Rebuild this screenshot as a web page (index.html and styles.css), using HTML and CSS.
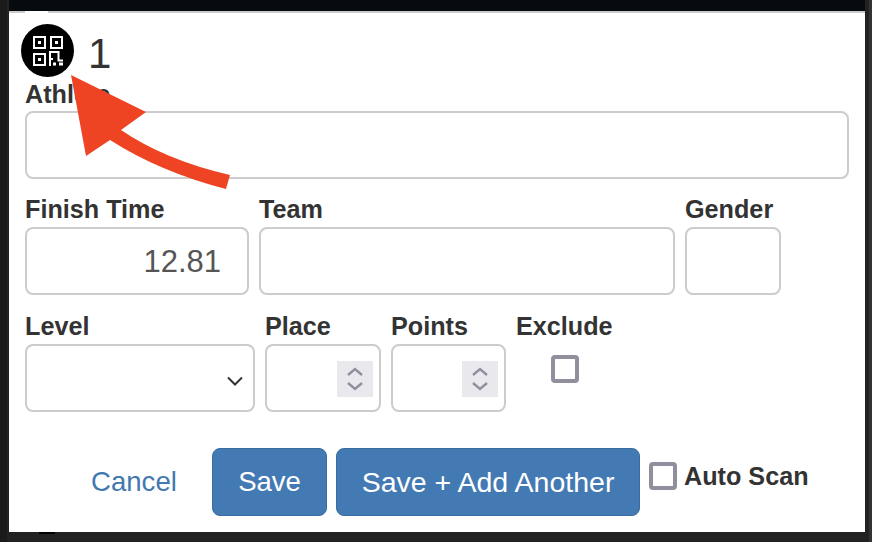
FILE: index.html
```html
<!DOCTYPE html>
<html lang="en">
<head>
<meta charset="utf-8">
<title>Result entry</title>
<link rel="stylesheet" href="styles.css">
</head>
<body>
<div class="frame">
  <div class="topbar"><span class="tab-notch"></span></div>
  <main class="panel">
    <header class="head">
      <span class="qr">
        <svg viewBox="0 0 30 30" width="30" height="30" fill="none" stroke="#fff" stroke-width="2">
          <rect x="1" y="1" width="11" height="11"/><rect x="18" y="1" width="11" height="11"/><rect x="1" y="18" width="11" height="11"/>
          <rect x="5" y="5" width="3" height="3" fill="#fff" stroke="none"/><rect x="22" y="5" width="3" height="3" fill="#fff" stroke="none"/><rect x="5" y="22" width="3" height="3" fill="#fff" stroke="none"/>
          <path d="M17 30V16h8.500v8.500H30M17 23h3"/>
          <path d="M20 28h3M26 28h4" stroke-width="3"/>
        </svg>
      </span>
      <span class="num">1</span>
    </header>
    <div class="row row-athlete">
      <div class="field grow"><label class="lbl">Athlete</label><div class="box"></div></div>
    </div>
    <div class="row row-mid">
      <div class="field w-time"><label class="lbl">Finish Time</label><div class="box value">12.81</div></div>
      <div class="field grow"><label class="lbl">Team</label><div class="box"></div></div>
      <div class="field w-gender"><label class="lbl">Gender</label><div class="box"></div></div>
    </div>
    <div class="row row-low">
      <div class="field w-level"><label class="lbl">Level</label>
        <div class="box select"><svg class="chev" viewBox="0 0 16 10" width="16" height="10"><path d="M1 1.500l7 7 7-7" fill="none" stroke="#333" stroke-width="2"/></svg></div>
      </div>
      <div class="field w-place"><label class="lbl">Place</label>
        <div class="box spin-box"><span class="spin"><svg viewBox="0 0 36 36" width="36" height="36" fill="none" stroke="#8f8f9d" stroke-width="2.4"><path d="M11 14l7-6 7 6M11 22l7 6 7-6"/></svg></span></div>
      </div>
      <div class="field w-points"><label class="lbl">Points</label>
        <div class="box spin-box"><span class="spin"><svg viewBox="0 0 36 36" width="36" height="36" fill="none" stroke="#8f8f9d" stroke-width="2.4"><path d="M11 14l7-6 7 6M11 22l7 6 7-6"/></svg></span></div>
      </div>
      <div class="field exclude"><label class="lbl">Exclude</label><span class="check check-center"></span></div>
    </div>
    <footer class="actions">
      <a class="cancel">Cancel</a>
      <button class="btn btn-save">Save</button>
      <button class="btn btn-add">Save + Add Another</button>
      <span class="auto"><span class="check"></span><span class="lbl">Auto Scan</span></span>
    </footer>
  </main>
  <div class="bottom"><span class="frag-a"></span><span class="frag-b">15:37</span></div>
</div>
<svg class="arrow" viewBox="0 0 872 542" width="872" height="542">
  <path fill="#ee4423" d="M71 75L146 112L121 130Q165 160 230 175L226 189Q160 172 110 140L86 156Z"/>
</svg>
</body>
</html>
```
FILE: styles.css
```css
html, body { margin: 0; padding: 0; }
body {
  width: 872px; height: 542px; overflow: hidden; position: relative;
  background: #222; font-family: "Liberation Sans", Arial, sans-serif; color: #333;
}
.frame {
  width: 872px; height: 542px; display: flex; flex-direction: column; overflow: hidden;
  border-left: 7px solid #1b1b1b; border-right: 3px solid #333; box-sizing: border-box;
}
.topbar {
  height: 11px; flex: none; background: #070b0f; border-bottom: 2px solid #ccc;
  margin-left: 2px; width: 856px; position: relative;
}
.tab-notch { position: absolute; left: 16px; bottom: -2px; width: 23px; height: 2px; background: #fff; }
.panel {
  flex: none; height: 519px; width: 856px; margin-left: 2px; box-sizing: border-box; position: relative; z-index: 1;
  background: #fff; padding: 11px 16px 0; display: flex; flex-direction: column;
}
.head { display: flex; align-items: center; height: 53px; margin-left: -4px; }
.qr {
  width: 53px; height: 53px; border-radius: 50%; background: #000;
  display: flex; align-items: center; justify-content: center;
}
.num { font-size: 42px; margin-left: 14px; line-height: 53px; margin-top: 6px; }
.row { display: flex; gap: 10px; }
.row-athlete { margin-top: 6px; width: 824px; }
.row-athlete .lbl { line-height: 22px; }
.row-mid { margin-top: 16px; }
.row-low { margin-top: 17px; }
.field { display: flex; flex-direction: column; flex: none; }
.grow { flex: 1; }
.row-mid .grow { flex: none; width: 416px; }
.lbl { font-size: 25.2px; font-weight: 700; line-height: 28px; height: 28px; color: #333; white-space: nowrap; }
.box {
  height: 68px; box-sizing: border-box; border: 2px solid #ccc; border-radius: 8px; background: #fff;
  display: flex; align-items: center;
}
.w-time { width: 224px; }
.w-gender { width: 96px; }
.w-level { width: 230px; }
.w-place { width: 116px; }
.w-points { width: 115px; }
.row-low .lbl, .row-mid .lbl { height: 32px; line-height: 28px; }
.value { justify-content: flex-end; padding-right: 26px; font-size: 31px; color: #555; padding-top: 2px; }
.select { justify-content: flex-end; padding-right: 10px; }
.chev { margin-top: 5px; }
.spin-box { justify-content: flex-end; padding-right: 6px; }
.spin { width: 36px; height: 36px; background: #e9e9ed; display: block; margin-top: 1px; }
.spin svg { display: block; }
.check {
  display: inline-block; width: 28px; height: 28px; box-sizing: border-box;
  border: 4px solid #8f8f9d; border-radius: 4px; background: #fff; flex: none;
}
.check-center { align-self: center; margin: 11px 0 0 1px; }
.actions { display: flex; align-items: flex-start; margin-top: 36px; height: 68px; }
.cancel { font-size: 27.600px; color: #4278b0; margin-left: 66px; width: 121px; line-height: 68px; }
.btn {
  height: 68px; box-sizing: border-box; border: 1px solid #3a6c9f; border-radius: 8px;
  background: #447ab3; color: #fff; font: 27.500px "Liberation Sans", Arial, sans-serif; padding: 0;
}
.btn-save { width: 115px; margin-right: 9px; }
.btn-add { width: 304px; margin-right: 9px; font-size: 28.500px; }
.auto { display: flex; align-items: center; gap: 7px; margin-top: 14px; }
.bottom { flex: 1; position: relative; }
.frag-a { position: absolute; left: 32px; top: 0; width: 16px; height: 2px; background: #000; }
.frag-b { position: absolute; left: 756px; top: -29px; font-size: 30px; color: #141414; }
.arrow { position: absolute; left: 0; top: 0; z-index: 2; pointer-events: none; }
```
